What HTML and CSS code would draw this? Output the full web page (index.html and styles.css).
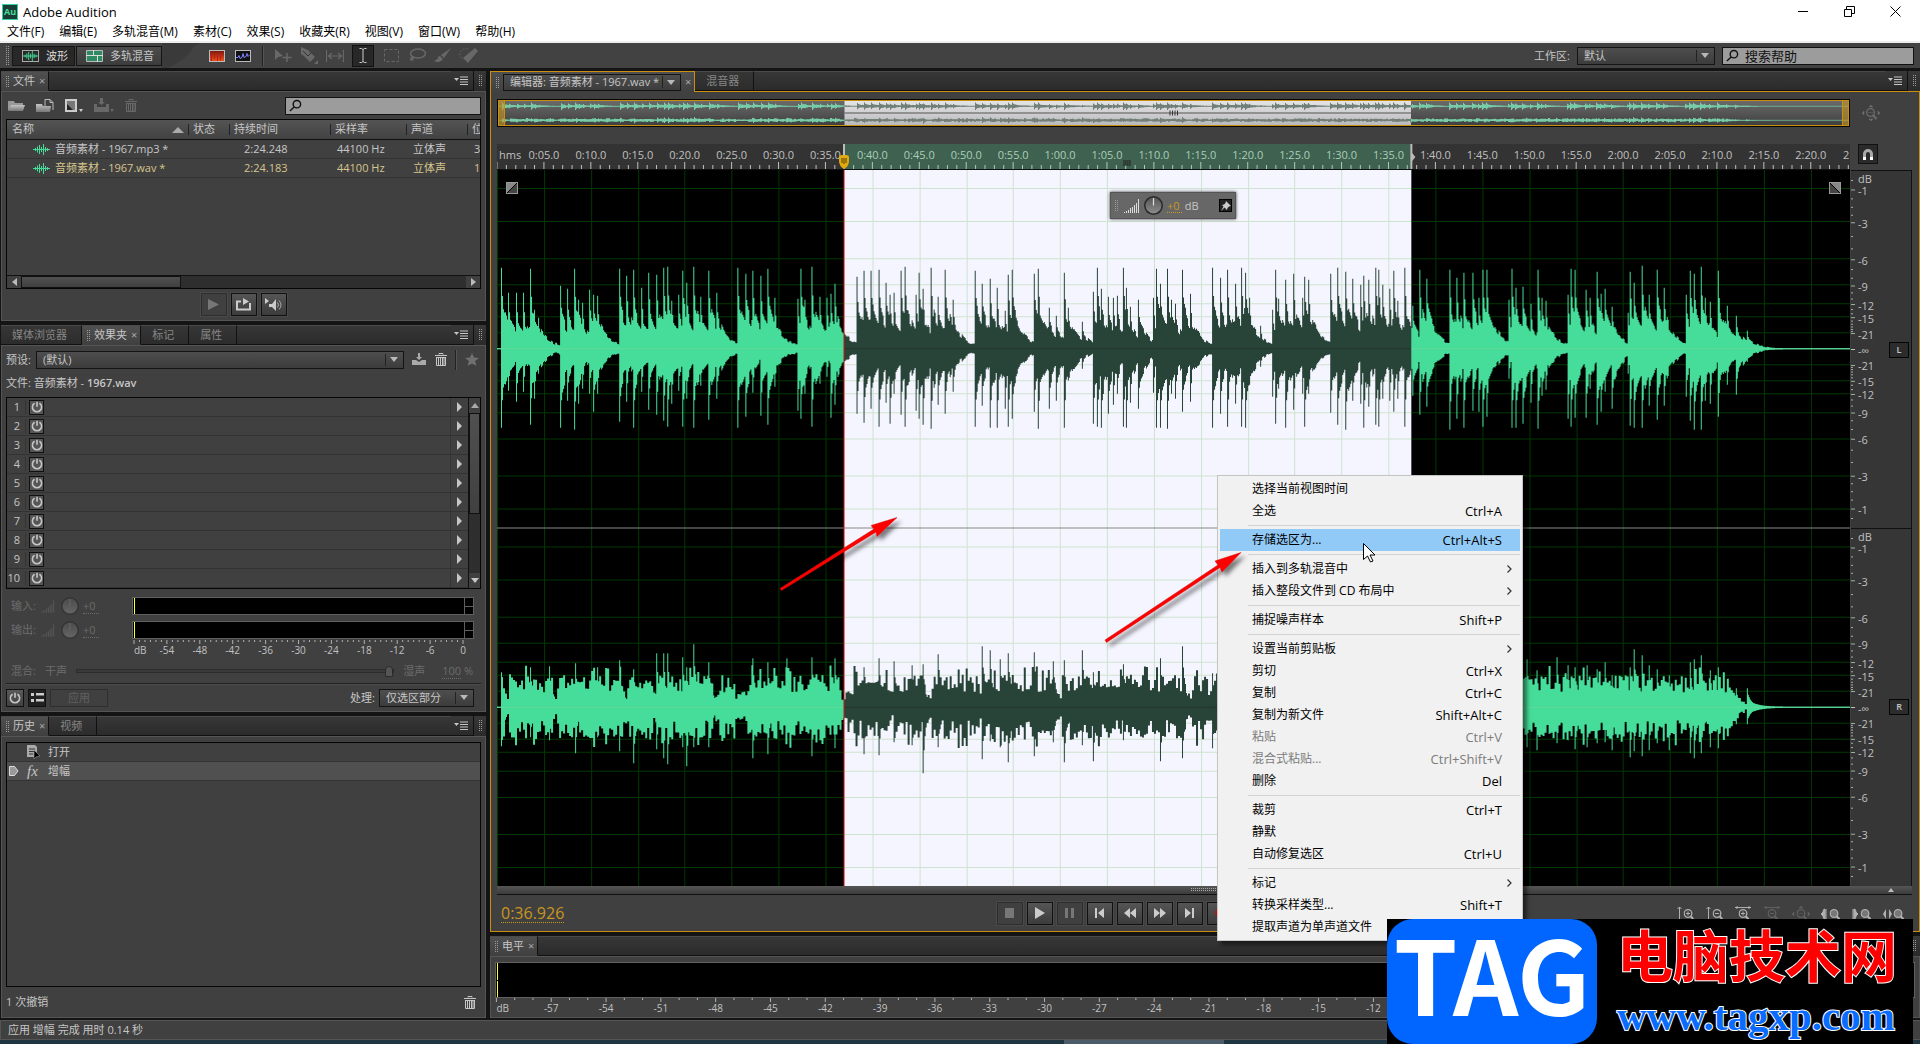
FILE: index.html
```html
<!DOCTYPE html>
<html lang="zh-CN">
<head>
    <meta charset="UTF-8">
    <meta name="viewport" content="width=device-width, initial-scale=1.0">
    <title>Adobe Audition</title>
    <link rel="stylesheet" href="styles.css">
</head>
<body>
    <svg class="defs" aria-hidden="true">
        <symbol id="i-power" viewBox="0 0 12 12"><path d="M3.6 2.2a4.6 4.6 0 1 0 4.8 0M6 .8v5" fill="none" stroke="currentColor" stroke-width="1.6"/></symbol>
        <symbol id="i-menu" viewBox="0 0 14 9"><path d="M0 2h5L2.5 5z" fill="currentColor"/><path d="M6 1h8M6 3.5h8M6 6h8M6 8.5h8" stroke="currentColor"/></symbol>
        <symbol id="i-down" viewBox="0 0 8 5"><path d="M0 0h8L4 5z" fill="currentColor"/></symbol>
        <symbol id="i-right" viewBox="0 0 5 10"><path d="M0 0l5 5-5 5z" fill="currentColor"/></symbol>
        <symbol id="i-search" viewBox="0 0 14 14"><circle cx="8.5" cy="5" r="4" fill="none" stroke="currentColor" stroke-width="1.5"/><path d="M5.5 8L1 12.5" stroke="currentColor" stroke-width="1.5"/></symbol>
        <symbol id="i-wave" viewBox="0 0 17 11"><path d="M0 5.5h17M2.5 4v3M4.5 2.5v6M6.5 1v9M8.5 3v5M10.5 0v11M12.5 3v5M14.5 4v3" stroke="currentColor"/></symbol>
        <symbol id="i-trash" viewBox="0 0 12 13"><path d="M4 1.5V.5h4v1M0 2.5h12M1 4.5h10" fill="none" stroke="currentColor"/><path d="M1.5 5v7.5h9V5M3.5 5v7M5.5 5v7M7.5 5v7M9 5v7" fill="none" stroke="currentColor"/></symbol>
        <symbol id="i-bars" viewBox="0 0 16 14"><path d="M.5 14v-1M2.5 14v-2M4.5 14v-3M6.5 14v-5M8.5 14V8M10.5 14V6M12.5 14V4M14.5 14V0" stroke="currentColor"/></symbol>
        <symbol id="i-knob" viewBox="0 0 18 18"><circle cx="9" cy="9" r="9" fill="#2a2a2a"/><circle cx="9" cy="9" r="7.5" fill="url(#knob)"/><path d="M9 2v7" stroke="currentColor" stroke-width="1.2"/></symbol>
        <symbol id="i-lens" viewBox="0 0 11 13"><circle cx="4.5" cy="4.5" r="3.8" fill="none" stroke="currentColor" stroke-width="1.3"/><path d="M7 7l3.5 4" stroke="currentColor" stroke-width="2"/></symbol>
        <linearGradient id="knob" x1="0" y1="0" x2="0" y2="1"><stop offset="0" stop-color="#555"/><stop offset="1" stop-color="#8c8c8c"/></linearGradient>
        <linearGradient id="folder" x1="0" y1="0" x2="0" y2="1"><stop offset="0" stop-color="#c4c4c4"/><stop offset="1" stop-color="#777"/></linearGradient>
        <linearGradient id="heat" x1="0" y1="0" x2="0" y2="1"><stop offset="0" stop-color="#7a1410"/><stop offset="1" stop-color="#f0531c"/></linearGradient>
    </svg>

    <div class="app">
        <header class="titlebar">
            <div class="title">
                <span class="logo">Au</span>
                <h1>Adobe Audition</h1>
                <div class="window-buttons">
                    <button aria-label="最小化"><svg width="11" height="11"><path d="M0 5.5h10" stroke="#000"/></svg></button>
                    <button aria-label="还原"><svg width="11" height="11" fill="none" stroke="#000"><path d="M.5 3.5h7v7h-7zM2.5 3.5v-3h8v7h-3"/></svg></button>
                    <button aria-label="关闭"><svg width="11" height="11"><path d="M.5.5l10 10M10.5.5l-10 10" stroke="#000"/></svg></button>
                </div>
            </div>
            <nav class="menubar">
                <a href="#">文件(F)</a><a href="#">编辑(E)</a><a href="#">多轨混音(M)</a><a href="#">素材(C)</a><a href="#">效果(S)</a><a href="#">收藏夹(R)</a><a href="#">视图(V)</a><a href="#">窗口(W)</a><a href="#">帮助(H)</a>
            </nav>
        </header>

        <div class="toolbar">
            <i class="grip"></i>
            <button class="mode pressed"><svg width="17" height="12" class="green"><rect x=".5" y=".5" width="16" height="11" fill="none" stroke="#aaa"/><use href="#i-wave" y="1" width="17" height="10"/></svg>波形</button>
            <button class="mode"><svg width="17" height="12"><path d="M.5.5h16v11H.5z" fill="#2d8a63" stroke="#bbb"/><path d="M0 5.5h17M7.5 0v5M11.5 6v6" stroke="#ddd"/></svg>多轨混音</button>
            <svg class="swoosh" width="60" height="25"><path d="M0 0H60V25H0z" fill="#3a3a3a"/><path d="M6 25Q22 18 32 4Q35 0 44 0H60V25z" fill="#424242"/></svg>
            <button class="tool"><svg width="16" height="12"><rect x=".5" y=".5" width="15" height="11" fill="url(#heat)" stroke="#bbb"/><path d="M2.5 4v7M5.5 3v6M8.5 5v6M11.5 3v7" stroke="#b81c14"/></svg></button>
            <button class="tool"><svg width="16" height="12"><rect x=".5" y=".5" width="15" height="11" fill="#111" stroke="#bbb"/><path d="M1 7.5h2l1-2 1 3 2-1 1-4 1 4 2-1 1-3 1 3 2-2" fill="none" stroke="#8080ff"/></svg></button>
            <i class="rule"></i>
            <button class="tool dim"><svg width="18" height="15"><path d="M1 1v11l3-3 5-1z" fill="currentColor"/><path d="M13 5v9M8.5 9.5h9" stroke="currentColor" stroke-width="1.5"/></svg></button>
            <button class="tool dim"><svg width="18" height="18"><path d="M1 0v7l3 2 6 6 5-5-7-7z" fill="currentColor"/><path d="M3 4l5 5 3-3" stroke="#333" fill="none"/><path d="M18 13v4h-4z" fill="currentColor"/></svg></button>
            <button class="tool dim"><svg width="18" height="12"><path d="M.5 0v12M17.5 0v12M3 6h12M6 3L2.5 6 6 9M12 3l3.5 3L12 9" fill="none" stroke="currentColor" stroke-width="1.2"/></svg></button>
            <button class="tool cursor-tool"><svg width="8" height="15"><path d="M.5.5h2l1.5 1 1.5-1h2M4 1.5v12M.5 14.5h2l1.5-1 1.5 1h2" fill="none" stroke="#ccc"/></svg></button>
            <button class="tool dim"><svg width="15" height="14"><rect x=".5" y=".5" width="14" height="12" fill="none" stroke="currentColor" stroke-dasharray="3 2"/></svg></button>
            <button class="tool dim"><svg width="17" height="15" fill="none" stroke="currentColor" stroke-width="1.5"><ellipse cx="9" cy="5.5" rx="7.5" ry="4.5"/><path d="M4 9q-3 1-2 3 3 0 2-3"/></svg></button>
            <button class="tool dim"><svg width="18" height="15"><path d="M17 0L7 7l3 3zM6 8q-2 0-2.5 3L0 13q6 3 9-2z" fill="currentColor"/></svg></button>
            <button class="tool dim"><svg width="20" height="17"><path d="M16 1l3 3L9 16l-5-5z" fill="currentColor"/><path d="M9 2q-9-1-8 7l3 4" fill="none" stroke="currentColor" stroke-dasharray="1.5 2"/></svg></button>
            <div class="workspace">
                <label for="workspace">工作区:</label>
                <span class="select"><select id="workspace"><option>默认</option></select><svg><use href="#i-down"/></svg></span>
                <label class="search help"><svg><use href="#i-search"/></svg><input type="text" value="搜索帮助" aria-label="搜索帮助"></label>
            </div>
        </div>

        <main>
            <div class="left">
                <section class="panel files">
                    <div class="tabs">
                        <span class="tab active"><i class="grip"></i>文件<button aria-label="关闭">×</button></span>
                        <span class="tab-space"></span>
                        <button class="panel-menu" aria-label="面板菜单"><svg><use href="#i-menu"/></svg></button><i class="grip end"></i>
                    </div>
                    <div class="panel-body">
                        <div class="file-tools">
                            <button><svg width="17" height="13"><path d="M0 12V2h6l1 2h8v2H4z" fill="#999"/><path d="M3 6h14l-2 6H0z" fill="url(#folder)"/></svg></button>
                            <button><svg width="18" height="14"><path d="M9 8V.5h5l3 3V11M14 .5v3h3" fill="none" stroke="#bbb"/><path d="M0 13V5h6l1 2h8l-1 6z" fill="url(#folder)"/></svg></button>
                            <button><svg width="18" height="14"><path d="M1 1h10v11H1z" fill="#777" stroke="#ccc" stroke-width="2"/><path d="M2 5l6 6H2z" fill="#222"/><path d="M14 10h4l-2 3z" fill="#ccc"/></svg></button>
                            <button class="dim"><svg width="20" height="15"><path d="M0 6h3v3h9V6h3v8H0zM6 0h3v4h2L7.5 7 4 4h2z" fill="currentColor"/><path d="M16 11h4l-2 3z" fill="currentColor"/></svg></button>
                            <button class="dim"><svg width="12" height="13"><use href="#i-trash"/></svg></button>
                            <label class="search"><svg><use href="#i-search"/></svg><input type="text" aria-label="搜索文件"></label>
                        </div>
                        <div class="box file-list">
                            <table>
                                <colgroup><col class="c-name"><col class="c-state"><col class="c-time"><col class="c-rate"><col class="c-chan"><col></colgroup>
                                <thead><tr><th>名称<svg class="sort" width="12" height="6"><path d="M0 6l6-6 6 6z" fill="#aaa"/></svg></th><th>状态</th><th>持续时间</th><th>采样率</th><th>声道</th><th>位</th></tr></thead>
                                <tbody>
                                    <tr><td><svg class="green" width="17" height="11"><use href="#i-wave"/></svg>音频素材 - 1967.mp3 *</td><td></td><td>2:24.248</td><td>44100 Hz</td><td>立体声</td><td>32</td></tr>
                                    <tr class="current"><td><svg class="green" width="17" height="11"><use href="#i-wave"/></svg>音频素材 - 1967.wav *</td><td></td><td>2:24.183</td><td>44100 Hz</td><td>立体声</td><td>16</td></tr>
                                </tbody>
                            </table>
                            <div class="hscroll"><button aria-label="向左"><svg width="5" height="8"><path d="M5 0v8L0 4z" fill="#bbb"/></svg></button><span class="thumb"></span><span class="track"></span><button aria-label="向右"><svg width="5" height="8"><path d="M0 0v8l5-4z" fill="#bbb"/></svg></button></div>
                        </div>
                        <div class="preview">
                            <button class="btn off"><svg width="11" height="11"><path d="M0 0l11 5.5L0 11z" fill="#777"/></svg></button>
                            <button class="btn"><svg width="15" height="13"><path d="M5 3.5H1v8h13V5" fill="none" stroke="#ccc" stroke-width="2"/><path d="M7 0l6 3.5L7 7z" fill="#ccc"/></svg></button>
                            <button class="btn"><svg width="19" height="14"><path d="M1 0l4 3-4 3zM5 6h3l4-5v12L8 9H5z" fill="#ccc"/><path d="M13.5 4.5q2 2.5 0 5M15 2.5q4 4.5 0 9" fill="none" stroke="#aaa"/></svg></button>
                        </div>
                    </div>
                </section>

                <section class="panel effects">
                    <div class="tabs">
                        <span class="tab wide">媒体浏览器</span><span class="tab active"><i class="grip"></i>效果夹<button aria-label="关闭">×</button></span><span class="tab">标记</span><span class="tab">属性</span>
                        <span class="tab-space"></span>
                        <button class="panel-menu" aria-label="面板菜单"><svg><use href="#i-menu"/></svg></button><i class="grip end"></i>
                    </div>
                    <div class="panel-body">
                        <div class="preset">
                            <label for="preset">预设:</label>
                            <span class="select"><select id="preset"><option>(默认)</option></select><svg><use href="#i-down"/></svg></span>
                            <button aria-label="保存预设"><svg width="14" height="13"><path d="M0 7h4l3 2 3-2h4v5H0zM6 0h2v4h2L7 7 4 4h2z" fill="#aaa"/></svg></button>
                            <button aria-label="删除预设"><svg width="12" height="13"><use href="#i-trash"/></svg></button>
                            <i class="rule"></i>
                            <button class="star" aria-label="收藏"><svg width="14" height="13"><path d="M7 0l2 4.5 5 .5-4 3 1.5 5L7 10.5 2.5 13 4 8 0 5l5-.5z" fill="#707070"/></svg></button>
                        </div>
                        <p class="rack-file">文件: 音频素材 - <b>1967.wav</b></p>
                        <div class="box rack">
                            <ol id="rack"></ol>
                            <div class="vscroll"><button aria-label="向上"><svg width="8" height="5"><path d="M0 5h8L4 0z" fill="#aaa"/></svg></button><span class="thumb"></span><span class="track"></span><button aria-label="向下"><svg width="8" height="5"><use href="#i-down"/></svg></button></div>
                        </div>
                        <div class="gain">
                            <label for="in-gain">输入:</label><svg class="bars"><use href="#i-bars"/></svg><svg class="knob"><use href="#i-knob"/></svg><input class="hot" id="in-gain" value="+0" disabled><span class="meter"></span>
                            <label for="out-gain">输出:</label><svg class="bars"><use href="#i-bars"/></svg><svg class="knob"><use href="#i-knob"/></svg><input class="hot" id="out-gain" value="+0" disabled><span class="meter"></span>
                        </div>
                        <svg class="rack-scale" id="rackScale"></svg>
                        <div class="mix"><label for="mix">混合:</label><span>干声</span><input type="range" id="mix" value="100" disabled><span>湿声</span><span class="amount"><u>100</u> %</span></div>
                        <div class="rack-foot">
                            <button class="mini" aria-label="机架开关"><svg width="12" height="12"><use href="#i-power"/></svg></button>
                            <button class="mini pressed" aria-label="列表"><svg width="13" height="9"><path d="M0 0h3v3H0zM0 6h3v3H0zM5 0h8v2.5H5zM5 6h8v2.5H5z" fill="#ccc"/></svg></button>
                            <button class="apply" disabled>应用</button>
                            <label for="process">处理:</label>
                            <span class="select"><select id="process"><option>仅选区部分</option></select><svg><use href="#i-down"/></svg></span>
                        </div>
                    </div>
                </section>

                <section class="panel history">
                    <div class="tabs">
                        <span class="tab active"><i class="grip"></i>历史<button aria-label="关闭">×</button></span><span class="tab">视频</span>
                        <span class="tab-space"></span>
                        <button class="panel-menu" aria-label="面板菜单"><svg><use href="#i-menu"/></svg></button><i class="grip end"></i>
                    </div>
                    <div class="panel-body">
                        <ul class="box">
                            <li><span class="mark"></span><svg width="14" height="14"><path d="M0 0h8l2 2v10H0z" fill="#aaa"/><path d="M2 4h6M2 6.5h6M2 9h4" stroke="#333"/><path d="M7 5v9l2-2 4-1z" fill="#000" stroke="#999" stroke-width=".6"/></svg>打开</li>
                            <li class="current"><span class="mark"><svg width="10" height="10"><path d="M.5.5h5L9 5 5.5 9.5h-5z" fill="#999" stroke="#ddd"/></svg></span><em>fx</em>增幅</li>
                        </ul>
                        <div class="history-foot"><span>1 次撤销</span><button aria-label="清除历史"><svg width="12" height="13"><use href="#i-trash"/></svg></button></div>
                    </div>
                </section>
            </div>

            <div class="right">
                <section class="panel editor">
                    <div class="tabs">
                        <span class="tab active"><i class="grip"></i><span class="select"><select aria-label="编辑器"><option>编辑器: 音频素材 - 1967.wav *</option></select><svg><use href="#i-down"/></svg></span><button aria-label="关闭">×</button></span><span class="tab">混音器</span>
                        <span class="tab-space"></span>
                        <button class="panel-menu" aria-label="面板菜单"><svg><use href="#i-menu"/></svg></button><i class="grip end"></i>
                    </div>
                    <div class="panel-body">
                        <div class="stage">
                            <div class="overview"><i class="handle"></i><svg id="overview" viewBox="0 0 1351 25" preserveAspectRatio="none"></svg><i class="handle"></i></div>
                            <button class="zoom-nav" aria-label="导航缩放"><svg width="18" height="16"><use href="#i-lens" x="4" y="3" width="11" height="13"/><path d="M6 7.5h5M9 0l2 2H7zM0 8l2-2v4zM18 8l-2-2v4zM9 16l2-2H7z" fill="currentColor" stroke="currentColor" stroke-width=".5"/></svg></button>
                            <svg class="ruler" id="ruler"></svg>
                            <button class="snap" aria-label="对齐"><svg width="10" height="11"><path d="M1.5 11V5a3.5 3.5 0 0 1 7 0v6" fill="none" stroke="#aaa" stroke-width="3"/><path d="M0 9.5h3M7 9.5h3" stroke="#fff" stroke-width="3"/></svg></button>
                            <div class="wave">
                                <svg id="wave" viewBox="0 0 1351 715" preserveAspectRatio="none"></svg>
                                <button class="fade in" aria-label="淡入"><svg width="12" height="12"><path d="M1 11L11 1v10z" fill="#444"/><path d="M1 11L11 1" stroke="#000"/></svg></button>
                                <button class="fade out" aria-label="淡出"><svg width="12" height="12"><path d="M1 1l10 10H1z" fill="#444"/><path d="M1 1l10 10" stroke="#000"/></svg></button>
                                <div class="hud"><i class="grip"></i><svg width="16" height="14"><use href="#i-bars"/></svg><svg width="19" height="19"><use href="#i-knob"/></svg><label><input class="hot" value="+0"> dB</label><button aria-label="固定"><svg width="10" height="10"><path d="M5 0l5 5-2 .5L6.5 7 6 9 3.5 6.5 0 10l2.5-4.5L1 4l2-.5L4.5 2z" fill="#ccc"/></svg></button></div>
                            </div>
                            <div class="levels-scale"><svg id="dbScale"></svg><div class="channels"><span><button>L</button></span><span><button>R</button></span></div></div>
                            <div class="wave-scroll"><i></i><svg width="6" height="4"><path d="M0 4h6L3 0z" fill="#bbb"/></svg></div>
                        </div>
                        <div class="transport">
                            <button class="time">0:36.926</button>
                            <div class="transport-buttons">
                                <button class="btn off" aria-label="停止"><svg width="9" height="10"><path d="M0 0h9v10H0z" fill="#777"/></svg></button>
                                <button class="btn" aria-label="播放"><svg width="10" height="12"><path d="M0 0l10 6-10 6z" fill="#ccc"/></svg></button>
                                <button class="btn off" aria-label="暂停"><svg width="9" height="10"><path d="M0 0h3v10H0zM6 0h3v10H6z" fill="#777"/></svg></button>
                                <button class="btn" aria-label="上一个"><svg width="9" height="10"><path d="M0 0h2v10H0zM9 0v10L3 5z" fill="#ccc"/></svg></button>
                                <button class="btn" aria-label="快退"><svg width="12" height="10"><path d="M6 0v10L0 5zM12 0v10L6 5z" fill="#ccc"/></svg></button>
                                <button class="btn" aria-label="快进"><svg width="12" height="10"><path d="M0 0v10l6-5zM6 0v10l6-5z" fill="#ccc"/></svg></button>
                                <button class="btn" aria-label="下一个"><svg width="9" height="10"><path d="M0 0v10l6-5zM7 0h2v10H7z" fill="#ccc"/></svg></button>
                                <button class="btn" aria-label="录制"><svg width="12" height="12"><circle cx="6" cy="6" r="5" fill="#b01818"/></svg></button>
                            </div>
                            <div class="zooms">
                                <button><svg width="18" height="15"><path d="M3.5 14V1M1.5 3l2-2 2 2M10 7.5h4M12 5.5v4" fill="none" stroke="currentColor"/><use href="#i-lens" x="7.5" y="3" width="11" height="13"/></svg></button>
                                <button><svg width="18" height="15"><path d="M3.5 14V1M1.5 3l2-2 2 2M10 7.5h4" fill="none" stroke="currentColor"/><use href="#i-lens" x="7.5" y="3" width="11" height="13"/></svg></button>
                                <button><svg width="18" height="15"><path d="M1 1.5h16M3 0v3M15 0v3M7 7.5h4M9 5.5v4" stroke="currentColor"/><use href="#i-lens" x="4.5" y="3" width="11" height="13"/></svg></button>
                                <button class="dim"><svg width="18" height="15"><path d="M1 1.5h16M3 0v3M15 0v3M7 7.5h4" stroke="currentColor"/><use href="#i-lens" x="4.5" y="3" width="11" height="13"/></svg></button>
                                <button class="dim"><svg width="18" height="15"><path d="M7 7.5h4M9 0l2 2H7zM0 8l2-2v4zM18 8l-2-2v4z" fill="currentColor" stroke="currentColor" stroke-width=".5"/><use href="#i-lens" x="4.5" y="3" width="11" height="13"/></svg></button>
                                <button><svg width="20" height="15"><path d="M4 3q-2 0-2 3L0 8l2 2q0 3 2 3zM5 3v10" fill="currentColor" stroke="currentColor"/><circle cx="13" cy="7.5" r="3.5" fill="#777"/><use href="#i-lens" x="8.5" y="3" width="11" height="13"/></svg></button>
                                <button><svg width="20" height="15"><path d="M2 3q2 0 2 3l2 2-2 2q0 3-2 3zM1 3v10" fill="currentColor" stroke="currentColor"/><circle cx="13" cy="7.5" r="3.5" fill="#777"/><use href="#i-lens" x="8.5" y="3" width="11" height="13"/></svg></button>
                                <button><svg width="22" height="15"><path d="M3 3v10L0 8zM6 3v10l3-5z" fill="currentColor"/><circle cx="15" cy="7.5" r="3.5" fill="#777"/><use href="#i-lens" x="10.5" y="3" width="11" height="13"/></svg></button>
                            </div>
                        </div>
                    </div>
                </section>

                <section class="panel levels">
                    <div class="tabs">
                        <span class="tab active"><i class="grip"></i>电平<button aria-label="关闭">×</button></span>
                        <span class="tab-space"></span>
                        <i class="grip end"></i>
                    </div>
                    <div class="panel-body"><div class="level-meter"></div><svg class="level-scale" id="levelScale"></svg></div>
                </section>
            </div>
        </main>
        <footer class="status">应用 增幅 完成 用时 0.14 秒</footer>
        <div class="taskbar"><span></span></div>
    </div>

    <div class="context-menu" id="contextMenu"></div>

    <svg class="pointers" width="1920" height="1044" aria-hidden="true">
        <defs><filter id="shade" x="-20%" y="-20%" width="150%" height="150%"><feDropShadow dx="4" dy="4" stdDeviation="2" flood-color="#000" flood-opacity=".5"/></filter></defs>
        <g filter="url(#shade)" fill="#f00" stroke="#d01010" stroke-width=".5">
            <path d="M780 588.5L874 529 871 525.5 897 517.5 877 536.5 876 532 781.5 590.5z"/>
            <path d="M1105 640L1218 565 1215 561 1241 552.5 1222 572 1220 567.5 1106.500 642.500z"/>
        </g>
        <path d="M1363.5 543.5v16l4-3.5 3 6 2.5-1-3-6h5z" fill="#fff" stroke="#000"/>
    </svg>

    <div class="watermark">
        <span class="tag">TAG</span>
        <div class="site"><strong>电脑技术网</strong><span>www.tagxp.com</span></div>
    </div>

    <script src="script.js"></script>
</body>
</html>
```

FILE: styles.css
```css
* {
    box-sizing: border-box;
    margin: 0;
    padding: 0;
}

body {
    background: #141414;
    color: #c6c6c6;
    font: 11px/14px "Open Sans", "Noto Sans CJK SC", sans-serif;
    overflow: hidden;
}

button, input, select {
    font: inherit;
    color: inherit;
    background: none;
    border: none;
    outline: none;
}

button {
    display: flex;
    align-items: center;
    justify-content: center;
}

a {
    color: inherit;
    text-decoration: none;
}

svg {
    display: block;
    flex: none;
}

ol, ul {
    list-style: none;
}

.defs {
    position: absolute;
    width: 0;
    height: 0;
}

.app {
    display: flex;
    flex-direction: column;
    height: 100vh;
}

.green {
    color: #46dd9a;
}

.dim {
    color: #686868;
}

/* title and menus */
.titlebar {
    background: #fff;
    color: #000;
    border-bottom: 2px solid #eee;
}

.title {
    display: flex;
    align-items: center;
    height: 23px;
    padding-left: 2px;
    gap: 5px;
}

.logo {
    width: 16px;
    height: 16px;
    background: #1c3b37;
    border: 1px solid #2fd2a0;
    color: #46dd9a;
    font: bold 9px/13px "Open Sans", sans-serif;
    text-align: center;
}

.title h1 {
    flex: 1;
    font-size: 13px;
    font-weight: normal;
}

.window-buttons {
    display: flex;
    padding-right: 2px;
}

.window-buttons button {
    width: 46px;
    height: 20px;
}

.menubar {
    display: flex;
    gap: 15px;
    height: 18px;
    padding-left: 7px;
    font-size: 12px;
    line-height: 18px;
}

/* toolbar */
.toolbar {
    display: flex;
    align-items: center;
    height: 25px;
    padding: 0 6px 0 5px;
    background: #424242;
}

.grip {
    width: 4px;
    height: 11px;
    background: conic-gradient(#999 25%, transparent 0) 0 0 / 2px 2px;
    flex: none;
}

.toolbar > .grip {
    height: 20px;
    margin-right: 3px;
}

.mode {
    height: 20px;
    padding: 0 7px 0 9px;
    gap: 7px;
    border: 1px solid #151515;
    background: linear-gradient(#4c4c4c, #3c3c3c);
}

.mode.pressed {
    background: #282828;
    padding-right: 6px;
    margin-right: 1px;
    color: #ddd;
}

.swoosh {
    width: 46px;
    margin-right: -4px;
}

.rule {
    width: 2px;
    height: 20px;
    background: #222;
    border-right: 1px solid #555;
    flex: none;
}

.tool {
    width: 26px;
    height: 22px;
}

.toolbar .rule {
    margin: 0 6px 0 6px;
}

.tool.cursor-tool {
    width: 22px;
    margin: 0 4px 0 4px;
    background: #282828;
    border: 1px solid #111;
}

.workspace {
    display: flex;
    align-items: center;
    margin-left: auto;
    gap: 7px;
}

.select {
    position: relative;
    display: flex;
    align-items: center;
    height: 18px;
    border: 1px solid #141414;
    background: linear-gradient(#4e4e4e, #3c3c3c);
}

.select select {
    appearance: none;
    flex: 1;
    height: 16px;
    padding-left: 6px;
    padding-right: 20px;
}

.select option {
    background: #404040;
}

.select svg {
    position: absolute;
    right: 5px;
    width: 8px;
    height: 5px;
    color: #b8b8b8;
    pointer-events: none;
}

.select::after {
    content: "";
    position: absolute;
    right: 17px;
    height: 12px;
    border-left: 1px solid #222;
}

.workspace .select {
    width: 138px;
}

.search {
    display: flex;
    align-items: center;
    height: 18px;
    width: 192px;
    padding-left: 3px;
    gap: 6px;
    background: #9c9c9c;
    border: 1px solid #111;
    color: #111;
}

.search svg {
    width: 13px;
    height: 14px;
}

.search input {
    flex: 1;
    min-width: 0;
}

.help {
    font-size: 13px;
}

/* panels */
main {
    flex: 1;
    min-height: 0;
    display: grid;
    grid-template-columns: minmax(0, 485fr) minmax(0, 1430fr);
    gap: 4px;
    padding: 3px 0 2px 1px;
}

.left {
    display: grid;
    grid-template-rows: minmax(0, 250fr) minmax(0, 387fr) minmax(0, 302fr);
    gap: 4px;
}

.right {
    display: grid;
    grid-template-rows: minmax(0, 861fr) minmax(0, 82fr);
    gap: 4px;
}

.panel {
    display: flex;
    flex-direction: column;
    min-width: 0;
    background: #404040;
}

.tabs {
    display: flex;
    height: 20px;
    background: linear-gradient(#383838, #2a2a2a);
    flex: none;
}

.tab {
    display: flex;
    align-items: center;
    padding: 0 14px 0 11px;
    color: #868686;
    border: 1px solid #111;
    border-left: none;
    border-top-color: #4a4a4a;
    background: linear-gradient(#363636, #2c2c2c);
}

.tab.active {
    padding: 0 3px 0 4px;
    gap: 4px;
    color: #c6c6c6;
    border-bottom-color: #404040;
    background: linear-gradient(#505050, #404040);
}

.tab.active button {
    color: #aaa;
    line-height: 10px;
}

.tab-space {
    flex: 1;
    border-bottom: 1px solid #111;
    border-top: 1px solid #4a4a4a;
}

.panel-menu {
    width: 23px;
    border-bottom: 1px solid #111;
    border-right: 1px solid #111;
}

.panel-menu svg {
    width: 14px;
    height: 9px;
    margin-right: 3px;
}

.grip.end {
    margin: 4px 4px 0 4px;
}

.panel-body {
    flex: 1;
    min-height: 0;
    display: flex;
    flex-direction: column;
    padding: 0 4px;
    border: 1px solid #555;
}

.box {
    border: 1px solid #050505;
    background: #404040;
}

.file-tools {
    display: flex;
    align-items: center;
    gap: 11px;
    height: 27px;
    padding-left: 2px;
    flex: none;
}

.file-tools .search {
    margin-left: auto;
    width: 196px;
}

.file-list {
    flex: 1;
    min-height: 0;
    display: flex;
    flex-direction: column;
    justify-content: space-between;
    overflow: hidden;
}

table {
    width: 100%;
    table-layout: fixed;
    border-collapse: collapse;
}

.c-name { width: 181px; }
.c-state { width: 41px; }
.c-time { width: 101px; }
.c-rate { width: 76px; }
.c-chan { width: 61px; }

th, td {
    height: 19px;
    padding-left: 5px;
    font-weight: normal;
    text-align: left;
    white-space: nowrap;
    overflow: hidden;
    border-bottom: 1px solid #333;
}

th {
    background: linear-gradient(#545454, #424242);
    border-bottom-color: #111;
}

th + th {
    background: linear-gradient(#222, #222) 0 4px / 1px 11px no-repeat, linear-gradient(#545454, #424242);
}

td:nth-child(n+3) {
    padding-left: 15px;
}

td:nth-child(n+4) {
    padding-left: 7px;
}

td:first-child {
    padding-left: 26px;
}

td svg {
    display: inline-block;
    vertical-align: -2px;
    margin-right: 5px;
}

.sort {
    float: right;
    margin: 5px 4px 0 0;
}

tr.current {
    color: #d6c58c;
    font-weight: 600;
}

.hscroll {
    display: flex;
    height: 13px;
    border-top: 1px solid #111;
}

.hscroll button {
    width: 14px;
}

.thumb {
    border: 1px solid #111;
    background: linear-gradient(#505050, #404040);
}

.hscroll .thumb {
    width: 160px;
}

.track {
    flex: 1;
    background: #2e2e2e;
}

.preview {
    display: flex;
    justify-content: center;
    align-items: center;
    gap: 4px;
    height: 31px;
    flex: none;
}

.btn {
    width: 26px;
    height: 23px;
    border: 1px solid #111;
    outline: 1px solid #4a4a4a;
    background: linear-gradient(#555, #3c3c3c);
}

.btn.off {
    border-color: #2e2e2e;
    background: #404040;
}

/* effects rack */
.preset {
    display: flex;
    align-items: center;
    gap: 7px;
    height: 27px;
    flex: none;
}

.preset .select {
    flex: 1;
    margin-left: -2px;
}

.preset button {
    width: 15px;
}

.preset .star {
    margin-right: 2px;
}

.rack-file {
    height: 24px;
    line-height: 19px;
    flex: none;
}

.rack-file b {
    font-weight: 600;
}

.rack {
    display: flex;
    flex: 1;
    min-height: 0;
}

.rack ol {
    flex: 1;
    display: grid;
    overflow: hidden;
}

.rack li {
    display: flex;
    align-items: center;
    border-bottom: 1px solid #333;
}

.rack li span {
    width: 19px;
    padding-right: 5px;
    border-right: 1px solid #343434;
    margin-right: 3px;
    display: flex;
    justify-content: flex-end;
}

.rack li button:last-child {
    width: 18px;
    margin-left: auto;
    align-self: stretch;
    border-left: 1px solid #343434;
}

.rack .power {
    width: 15px;
    height: 15px;
    border: 1px solid #111;
    background: #555;
}

.vscroll {
    display: flex;
    flex-direction: column;
    width: 12px;
    border-left: 1px solid #111;
}

.vscroll button {
    height: 15px;
}

.vscroll .thumb {
    height: 101px;
}

.gain {
    display: grid;
    grid-template-columns: 26px 16px 18px 17px 1fr;
    align-items: center;
    gap: 6px 4px;
    padding: 8px 7px 0 5px;
    color: #6c6c6c;
}

.bars {
    width: 14px;
    height: 13px;
    color: #5a5a5a;
}

.knob {
    width: 18px;
    height: 18px;
    color: #888;
    opacity: .5;
}

.hot {
    width: 16px;
    height: 15px;
    border-bottom: 1px dotted currentColor;
}

.meter {
    height: 18px;
    margin-left: 28px;
    border: 1px solid #606060;
    background:
        linear-gradient(#ffff30, #ffff30) 1px 0 / 1px 100% no-repeat,
        linear-gradient(#606060, #606060) right 8px / 8px 1px no-repeat,
        linear-gradient(#606060, #606060) right 8px top / 1px 100% no-repeat,
        #000;
}

.rack-scale {
    width: auto;
    height: 19px;
    margin: 1px 18px 0 128px;
    overflow: visible;
}

.rack-scale, .level-scale, .ruler {
    fill: #c0c0c0;
    stroke: none;
}

.rack-scale {
    font-size: 10px;
}

.mix {
    display: flex;
    align-items: center;
    height: 24px;
    padding: 0 8px 0 5px;
    gap: 9px;
    color: #6c6c6c;
    flex: none;
}

.mix input {
    appearance: none;
    flex: 1;
    min-width: 0;
    height: 4px;
    border: 1px solid #2c2c2c;
    background: #3a3a3a;
}

.mix input::-webkit-slider-thumb {
    appearance: none;
    width: 8px;
    height: 11px;
    border: 1px solid #2a2a2a;
    border-radius: 4px 4px 0 0;
    background: #555;
}

.amount {
    margin-left: 8px;
}

.amount u {
    text-decoration: none;
    border-bottom: 1px dotted;
}

.rack-foot {
    display: flex;
    align-items: center;
    gap: 4px;
    height: 28px;
    padding-right: 7px;
    border-top: 1px solid #222;
    box-shadow: inset 0 1px #4c4c4c;
    flex: none;
}

.mini {
    width: 18px;
    height: 18px;
    border: 1px solid #111;
    background: linear-gradient(#5a5a5a, #404040);
}

.mini.pressed {
    background: #222;
}

.apply {
    width: 58px;
    height: 18px;
    color: #606060;
    border: 1px solid #2e2e2e;
}

.rack-foot label {
    margin-left: auto;
}

.rack-foot .select {
    width: 95px;
}

.history .box {
    flex: 1;
    margin-top: 5px;
}

.history li {
    display: flex;
    align-items: center;
    height: 19px;
    border-bottom: 1px solid #343434;
}

.history li.current {
    background: #505050;
}

.history li > svg, .history em {
    width: 14px;
    margin-right: 7px;
}

.history em {
    font: italic 15px/14px "Liberation Serif", serif;
}

.mark {
    width: 20px;
    padding-left: 2px;
}

.history-foot {
    display: flex;
    justify-content: space-between;
    align-items: center;
    height: 30px;
    padding-right: 5px;
}

/* editor */
.editor .panel-body {
    border: 1px solid #c98f10;
    padding: 0 7px 0 6px;
}

.editor .tab.active {
    border: 1px solid #c98f10;
    border-bottom: none;
    margin-bottom: -1px;
    z-index: 1;
}

.editor .tab.active .select {
    height: 17px;
}

.stage {
    flex: 1;
    min-height: 0;
    display: grid;
    grid-template-columns: minmax(0, 1fr) 61px;
    grid-template-rows: 45px 26px minmax(0, 1fr) 9px;
    padding-top: 7px;
    column-gap: 1px;
}

.overview {
    display: flex;
    height: 28px;
    border: 1px solid #050505;
    background: #555;
}

.overview svg {
    flex: 1;
    min-width: 0;
    height: 26px;
    margin: 0 -7px;
}

.handle {
    z-index: 1;
    width: 7px;
    border: 1px solid #c98f10;
    background: rgba(201, 150, 30, .6);
}

.zoom-nav {
    justify-self: start;
    align-self: start;
    height: 28px;
    margin-left: 11px;
    color: #6c6c6c;
}

.ruler {
    width: 100%;
    height: 26px;
    background: #333;
    overflow: hidden;
    border-bottom: 1px solid #111;
}

.snap {
    width: 20px;
    height: 20px;
    margin-left: 7px;
    background: #2a2a2a;
    border: 1px solid #111;
}

.wave {
    position: relative;
    background: #000;
    min-height: 0;
}

.wave > svg {
    width: 100%;
    height: 100%;
}

.fade {
    position: absolute;
    top: 12px;
    width: 12px;
    height: 12px;
    background: #888;
    outline: 1px solid #999;
    outline-offset: -1px;
}

.fade.in {
    left: 9px;
}

.fade.out {
    right: 9px;
}

.hud {
    position: absolute;
    left: 613px;
    top: 22px;
    display: flex;
    align-items: center;
    gap: 4px;
    width: 126px;
    height: 27px;
    padding: 0 3px;
    background: #676767;
    border: 1px solid #555;
    box-shadow: 0 0 3px #333;
}

.hud svg {
    color: #ddd;
}

.hud .hot {
    color: #c9961e;
    width: 15px;
}

.hud > svg:first-of-type {
    margin-left: 2px;
}

.hud button {
    margin-left: auto;
    width: 13px;
    height: 13px;
    background: #222;
    border: 1px solid #000;
}

.levels-scale {
    display: flex;
    border-top: 1px solid #111;
    border-right: 1px solid #111;
    background: #363636;
    min-height: 0;
}

.levels-scale svg {
    width: 36px;
    height: 100%;
    fill: #c0c0c0;
    overflow: visible;
}

.channels {
    flex: 1;
    display: flex;
    flex-direction: column;
}

.channels span {
    flex: 1;
    display: flex;
    align-items: center;
}

.channels button {
    width: 20px;
    height: 16px;
    margin-left: 2px;
    background: #2c2c2c;
    border: 1px solid #050505;
    font-size: 9px;
    font-weight: 600;
}

.wave-scroll {
    grid-column: 1 / 3;
    display: flex;
    align-items: center;
    justify-content: space-between;
    padding-left: 49%;
    padding-right: 18px;
    background: linear-gradient(#555, #3c3c3c);
    border-bottom: 1px solid #111;
}

.wave-scroll i {
    width: 48px;
    height: 4px;
    background: conic-gradient(#aaa 25%, transparent 0) 0 0 / 2px 2px;
}

.transport {
    display: flex;
    align-items: center;
    height: 36px;
    flex: none;
}

.time {
    margin-left: 4px;
    font-size: 16px;
    line-height: 18px;
    color: #c9961e;
    border-bottom: 1px dotted;
}

.transport-buttons {
    display: flex;
    gap: 4px;
    margin-left: calc(31% - 6px);
}

.zooms {
    display: flex;
    margin-left: auto;
    padding-right: 7px;
    gap: 11px;
    color: #b0b0b0;
}

.zooms .dim {
    color: #606060;
}

.levels .panel-body {
    padding: 5px 4px 0 4px;
}

.level-meter {
    flex: 1;
    border: 1px solid #606060;
    background:
        linear-gradient(#000, #000) 0 17px / 3px 1px no-repeat,
        linear-gradient(#ffff30, #ffff30) 1px 0 / 1px 100% no-repeat,
        #000;
}

.level-scale {
    width: 100%;
    height: 19px;
    overflow: visible;
    font-size: 10px;
}

.status {
    height: 20px;
    padding-left: 7px;
    line-height: 18px;
    background: #404040;
    border: 1px solid #555;
    border-right: none;
}

.taskbar {
    height: 4px;
    background: #1f3541;
    padding-left: 55%;
}

.taskbar span {
    display: block;
    width: 160px;
    height: 4px;
    margin-left: 8px;
    background: #4b5c68;
}

/* right-click menu */
.context-menu {
    position: absolute;
    left: 1217px;
    top: 475px;
    width: 306px;
    padding: 2px;
    color: #000;
    background: #f1f1f1;
    border: 1px solid #c4c4c4;
    box-shadow: 4px 4px 4px rgba(0, 0, 0, .5);
    font-size: 12px;
}

.context-menu button {
    width: 100%;
    height: 22px;
    justify-content: space-between;
    padding: 0 18px 0 32px;
}

.context-menu button svg {
    margin-right: -10px;
}

.context-menu .key {
    font-size: 13px;
}

.context-menu button:disabled {
    color: #7c7c7c;
}

.context-menu .hover {
    background: #91c9f7;
}

.context-menu hr {
    margin: 3px 0 3px 28px;
    border: none;
    border-top: 1px solid #d2d2d2;
}

.pointers {
    position: absolute;
    left: 0;
    top: 0;
    pointer-events: none;
}

.watermark {
    position: absolute;
    left: 1387px;
    top: 919px;
    display: flex;
    width: 526px;
    height: 125px;
    background: #000;
}

.tag {
    width: 210px;
    border-radius: 26px;
    background: #06f;
    color: #fff;
    font: bold 102px/106px "Noto Sans CJK SC", sans-serif;
    text-align: center;
}

.site {
    flex: 1;
    padding-left: 20px;
    white-space: nowrap;
}

.site strong {
    display: block;
    color: #f00;
    font: bold 56px/68px "Noto Sans CJK SC", sans-serif;
    -webkit-text-stroke: 2px #fff;
    paint-order: stroke fill;
}

.site span {
    display: block;
    color: #0a6cff;
    font: bold 41px/58px "Liberation Serif", serif;
    -webkit-text-stroke: 2px #fff;
    paint-order: stroke fill;
}
```

FILE: script.js
```js
const WIDTH = 1351;
const HEIGHT = 715;
const SEL_START = 346.5;
const SEL_END = 913;
const SECOND = WIDTH / 144.18;

// x, height above the axis, height below it
const left = [
    4,81,79, 11,56,42, 19,56,53, 26,56,43, 33,80,76, 37,39,50, 41,31,25, 63,63,79, 70,60,52, 77,80,81,
    81,49,55, 85,46,40, 92,59,45, 96,54,63, 100,53,45, 122,80,73, 129,73,53, 136,79,79, 144,61,43,
    151,76,61, 159,74,66, 166,81,72, 170,82,78, 174,48,55, 181,54,42, 185,78,78, 189,66,50, 196,82,79,
    203,52,37, 211,78,71, 219,56,50, 240,81,79, 248,75,68, 255,78,44, 263,73,67, 270,80,76, 277,51,38,
    300,50,62, 303,80,70, 307,49,45, 314,82,78, 322,52,35, 329,51,28, 333,55,69, 337,65,56, 359,72,65,
    366,78,74, 373,78,60, 381,79,78, 388,66,54, 392,54,75, 396,56,45, 403,78,66, 407,82,78, 418,54,62,
    421,76,70, 425,60,76, 433,81,80, 440,52,56, 447,79,65, 455,49,43, 477,78,78, 484,65,57, 492,70,79,
    499,61,79, 507,38,60, 510,74,78, 514,79,70, 536,75,63, 540,80,80, 551,41,60, 558,33,52, 566,76,79,
    570,41,25, 584,27,20, 595,57,75, 599,81,78, 603,60,79, 610,52,65, 615,51,56, 619,53,45, 625,81,78,
    628,61,79, 632,42,54, 640,49,60, 655,51,44, 658,80,79, 662,65,79, 669,80,80, 673,49,45, 677,45,50,
    684,79,63, 692,55,53, 714,81,79, 722,71,65, 729,79,78, 737,65,55, 743,81,78, 747,76,79, 751,51,36,
    762,23,18, 774,39,48, 777,79,75, 780,50,40, 787,69,79, 795,75,61, 804,51,45, 806,72,78, 810,69,45,
    832,75,64, 839,81,76, 847,77,81, 854,70,52, 862,64,55, 865,73,79, 870,69,58, 877,81,76, 880,79,78,
    884,64,50, 891,60,52, 895,78,63, 899,48,50, 906,81,78, 914,43,47, 921,79,66, 928,70,58, 951,79,81,
    958,71,70, 965,76,79, 974,76,62, 980,51,63, 984,79,78, 988,79,68, 1010,49,30, 1013,80,79, 1017,61,79,
    1024,62,75, 1032,45,54, 1039,79,80, 1043,51,47, 1047,48,41, 1069,54,70, 1072,80,78, 1076,79,69,
    1087,59,69, 1091,51,40, 1098,77,76, 1102,55,63, 1106,60,43, 1113,42,60, 1129,36,25, 1131,77,77,
    1135,66,79, 1143,83,79, 1150,54,57, 1158,79,71, 1165,61,57, 1187,54,48, 1191,78,72, 1195,75,81,
    1202,82,81, 1206,51,52, 1211,47,55, 1219,78,68, 1228,43,36, 1237,33,46, 1248,18,13
];
const right = [
    4,35,39, 33,40,30, 52,41,33, 78,44,46, 100,40,30, 122,47,44, 136,38,56, 159,54,42, 166,54,51, 170,54,57,
    185,50,40, 189,40,59, 196,63,40, 211,45,40, 255,49,51, 270,45,47, 289,49,35, 314,50,49, 337,49,41,
    366,40,47, 381,49,48, 396,46,35, 414,42,38, 425,43,66, 440,53,40, 484,61,52, 492,57,34, 502,48,40,
    510,54,55, 536,55,49, 555,46,35, 566,47,55, 584,57,38, 595,35,54, 625,43,33, 662,49,54, 684,61,51,
    714,34,41, 1028,48,40, 1038,37,43, 1058,50,36, 1069,42,33, 1076,40,42, 1088,42,40, 1098,38,36,
    1106,45,35, 1113,32,43, 1131,40,50, 1135,58,44, 1143,52,49, 1150,42,43, 1158,38,36, 1170,32,43,
    1191,45,46, 1195,48,51, 1202,52,46, 1211,37,40, 1219,40,41, 1237,19,17, 1248,19,17
];
// Short pauses of the right channel
const dips = [9, 58, 128, 157, 218, 240, 246, 346, 353, 393, 430, 483, 560, 690, 712];

let seed = 7;
function random() {
    seed = (seed * 16807) % 2147483647;
    return seed / 2147483647;
}

// Spikes that fall off quickly, over a short decaying body
function envelope(list, dense) {
    const up = [], down = [];
    let u0 = 0, d0 = 0, jitter = 1;
    for (let x = 0; x < WIDTH; x += 1) {
        if (x % 2 === 0) {
            jitter = 0.8 + random() * 0.4;
            u0 = 3 + random() * 3;
            d0 = 3 + random() * 3;
            if (dense) {
                const swell = x > 1222 ? Math.max(0.15, 1 - (x - 1222) / 26) : 1;
                const dip = dips.some(p => Math.abs(p - x) < 3) ? 0.5 : 1;
                u0 = (15 + random() * 17) * swell * dip;
                d0 = (13 + random() * 19) * swell * dip;
                if (random() > 0.8) {
                    u0 += 10 * swell * dip;
                    d0 += 9 * swell * dip;
                }
            }
        }
        let u = u0, d = d0;
        if (x < 4 || x > 1250) {
            u = d = x < 4 ? 0.5 : 0.5 + Math.exp(-(x - 1250) / 9) * 6;
        }
        for (let i = 0; i < list.length; i += 3) {
            const gap = x - list[i];
            if (gap < 0 || gap > 30) continue;
            const tau = dense ? 4 : 11;
            const fall = gap < 1 ? 1 : (gap < 2 ? 0.65 : 0.48 * jitter * Math.exp(-(gap - 2) / tau));
            u = Math.max(u, list[i + 1] * fall);
            d = Math.max(d, list[i + 2] * fall);
        }
        up.push(u);
        down.push(d);
    }
    return { up, down };
}

function shape(env, from, to, axis, scale) {
    let top = '', bottom = '';
    for (let x = Math.floor(from); x < Math.min(to, WIDTH); x++) {
        const a = Math.max(x, from), b = Math.min(x + 1, to);
        const u = (axis - env.up[x] * scale).toFixed(1);
        const d = (axis + env.down[x] * scale).toFixed(1);
        top += `L${a} ${u}L${b} ${u}`;
        bottom = `L${b} ${d}L${a} ${d}` + bottom;
    }
    return 'M' + top.slice(1) + bottom + 'z';
}

const envL = envelope(left, false);
const envR = envelope(right, true);
const DB = [1, 3, 6, 9, 12, 15, 21];
const axes = [178.5, 536.5];

function drawWave() {
    const lines = (from, to, color) => {
        let d = '';
        for (let t = 0; t < 145; t += 5) {
            const x = Math.round(t * SECOND) + 0.5;
            if (x >= from && x <= to) d += `M${x} 0V${HEIGHT}`;
        }
        axes.forEach(axis => DB.forEach(db => {
            const off = Math.round(179 * Math.pow(10, -db / 20));
            d += `M${from} ${axis - off}H${to}M${from} ${axis + off}H${to}`;
        }));
        return `<path d="${d}" stroke="${color}" fill="none"/>`;
    };
    const parts = [[0, SEL_START, '#46dd9a', '#003800'], [SEL_START, SEL_END, '#284438', '#cfe3d0'], [SEL_END, WIDTH, '#46dd9a', '#003800']];
    let html = `<rect x="${SEL_START}" width="${SEL_END - SEL_START}" height="${HEIGHT}" fill="#f4f5ff"/>`;
    parts.forEach(([from, to, color, grid]) => {
        html += lines(from, to, grid);
        html += `<path fill="${color}" d="${shape(envL, from, to, axes[0], 1)}${shape(envR, from, to, axes[1], 1)}"/>`;
        const mid = color === '#284438' ? '#24352a' : '#62dc98';
        html += `<path stroke="${mid}" d="M${from} ${axes[0]}H${to}M${from} ${axes[1]}H${to}"/>`;
    });
    html += `<path stroke="#888" d="M0 357.5H${WIDTH}"/><path stroke="#d01010" d="M346.5 0V${HEIGHT}"/>`;
    document.getElementById('wave').innerHTML = html;
}

function drawOverview() {
    let html = `<defs><linearGradient id="og" x2="0" y2="1"><stop offset="0" stop-color="#6c6c6c"/><stop offset="1" stop-color="#3c3c3c"/></linearGradient>
        <linearGradient id="os" x2="0" y2="1"><stop offset="0" stop-color="#e6e6e8"/><stop offset="1" stop-color="#b8b8bc"/></linearGradient></defs>
        <rect width="1351" height="26" fill="url(#og)"/><rect x="${SEL_START}" width="${SEL_END - SEL_START}" height="25" fill="url(#os)"/>`;
    [[0, SEL_START, '#78cda8'], [SEL_START, SEL_END, '#728078'], [SEL_END, WIDTH, '#78cda8']].forEach(([a, b, color]) => {
        html += `<path fill="${color}" d="${shape(envL, a, b, 6, 0.045)}${shape(envR, a, b, 19.5, 0.05)}"/><path stroke="${color}" stroke-width=".7" d="M${a} 6H${b}M${a} 19.5H${b}"/>`;
    });
    html += `<path stroke="#555" d="M${SEL_START} 12.5H${SEL_END}"/><path stroke="#c98f10" fill="none" d="M0 .5H1351M0 24.5H1351"/>`;
    for (let i = 0; i < 4; i++) html += `<path stroke="#333" d="M${672 + i * 2.5} 10v5"/>`;
    document.getElementById('overview').innerHTML = html;
}

function clock(t) {
    return Math.floor(t / 60) + ':' + String(t % 60).padStart(2, '0') + '.0';
}

function drawRuler() {
    const pct = x => (x / WIDTH * 100).toFixed(3) + '%';
    let html = `<rect x="${pct(SEL_START)}" width="${pct(SEL_END - SEL_START)}" height="26" fill="#3f6150"/><text x="2" y="15">hms</text>`;
    for (let t = 0; t < 145; t++) {
        const x = t * SECOND;
        const tall = t % 5 === 0;
        const color = x > SEL_START && x < SEL_END ? '#a9cfb9' : '#c0c0c0';
        html += `<line x1="${pct(x)}" x2="${pct(x)}" y1="${tall ? 18 : 21}" y2="25" stroke="${color}"/>`;
        if (tall && t) html += `<text x="${pct(x)}" y="15" text-anchor="middle" fill="${color}">${clock(t)}</text>`;
    }
    html += `<text x="${pct(1344)}" y="15">2</text>
        <svg x="${pct(SEL_START)}" overflow="visible"><path d="M0 0V12" stroke="#bbb" stroke-width="2"/><path d="M-5 13Q-5 11-2 11H2Q5 11 5 13V17Q5 22 0 25Q-5 22-5 17z" fill="#e0aa10"/><path d="M-2 14v5M0 14v6M2 14v5" stroke="#5a4200"/></svg>
        <svg x="${pct(SEL_END)}" overflow="visible"><path d="M0 0V25" stroke="#bbb" stroke-width="2"/><path d="M0 8l4 5-4 5z" fill="#bbb"/></svg>`;
    for (let i = 0; i < 4; i++) html += `<line x1="${pct(626 + i * 2)}" x2="${pct(626 + i * 2)}" y1="16" y2="22" stroke="#222"/>`;
    document.getElementById('ruler').innerHTML = html;
}

function drawDbScale() {
    const pct = y => (y / HEIGHT * 100).toFixed(3) + '%';
    let html = '';
    axes.forEach(axis => {
        html += `<text x="7" y="${pct(axis - 167)}">dB</text><text x="7" y="${pct(axis + 5)}">-∞</text><line x1="0" x2="4" y1="${pct(axis)}" y2="${pct(axis)}" stroke="#c0c0c0"/>`;
        for (let db = 0.5; db < 22; db += db < 3 ? 0.5 : 1) {
            const off = 179 * Math.pow(10, -db / 20);
            const main = DB.includes(db);
            [-off, off].forEach(y => {
                html += `<line x1="0" x2="${main ? 4 : 2}" y1="${pct(axis + y)}" y2="${pct(axis + y)}" stroke="#aaa"/>`;
                if (main) html += `<text x="7" y="${pct(axis + y + 5)}">-${db}</text>`;
            });
        }
    });
    html += `<line x1="0" x2="60" y1="50%" y2="50%" stroke="#111"/>`;
    document.getElementById('dbScale').innerHTML = html;
}

// Horizontal level scale: first step is labelled dB
function drawLevels(id, start, step, width, offset) {
    let html = '';
    const count = -start / step;
    const minor = step === 6 ? 6 : 3;
    for (let i = 0; i <= count * minor; i++) {
        const x = (offset + i / (count * minor) * width).toFixed(3) + '%';
        const anchor = i ? 'middle' : 'start';
        html += `<line x1="${x}" x2="${x}" y1="0" y2="${i % minor ? 2 : 4}" stroke="#b0b0b0"/>`;
        if (i % minor === 0) html += `<text x="${x}" y="14" text-anchor="${anchor}">${i ? start + i / minor * step : 'dB'}</text>`;
    }
    document.getElementById(id).innerHTML = html;
}

function buildRack() {
    const rack = document.getElementById('rack');
    for (let i = 1; i <= 10; i++) {
        rack.innerHTML += `<li><span>${i}</span><button class="power" aria-label="开关 ${i}"><svg width="12" height="12"><use href="#i-power"/></svg></button>
            <button aria-label="效果 ${i}"><svg width="5" height="10"><use href="#i-right"/></svg></button></li>`;
    }
}

function buildMenu() {
    const items = [['选择当前视图时间'], ['全选', 'Ctrl+A'], 0, ['存储选区为...', 'Ctrl+Alt+S', 'hover'], 0,
        ['插入到多轨混音中', '>'], ['插入整段文件到 CD 布局中', '>'], 0, ['捕捉噪声样本', 'Shift+P'], 0,
        ['设置当前剪贴板', '>'], ['剪切', 'Ctrl+X'], ['复制', 'Ctrl+C'], ['复制为新文件', 'Shift+Alt+C'],
        ['粘贴', 'Ctrl+V', 'off'], ['混合式粘贴...', 'Ctrl+Shift+V', 'off'], ['删除', 'Del'], 0,
        ['裁剪', 'Ctrl+T'], ['静默'], ['自动修复选区', 'Ctrl+U'], 0,
        ['标记', '>'], ['转换采样类型...', 'Shift+T'], ['提取声道为单声道文件']];
    const arrow = '<svg width="5" height="8"><path d="M.5.5L4 4 .5 7.5" fill="none" stroke="#333" stroke-width="1.2"/></svg>';
    document.getElementById('contextMenu').innerHTML = items.map(item => {
        if (!item) return '<hr>';
        const [label, key = '', state = ''] = item;
        return `<button class="${state}" ${state === 'off' ? 'disabled' : ''}><span>${label}</span>${key === '>' ? arrow : `<span class="key">${key}</span>`}</button>`;
    }).join('');
}

drawWave();
drawOverview();
drawRuler();
drawDbScale();
drawLevels('rackScale', -60, 6, 100, 0);
drawLevels('levelScale', -60, 3, 77.2, 0.1);
buildRack();
buildMenu();
```
